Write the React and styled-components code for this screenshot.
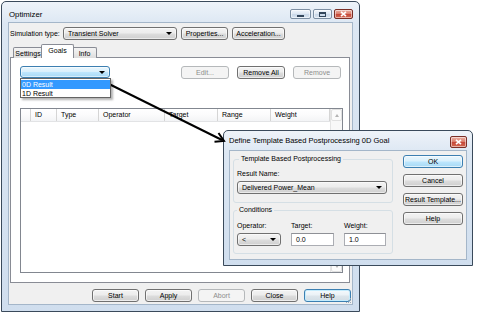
import React from 'react';
import styled, { createGlobalStyle, css } from 'styled-components';

const GlobalStyle = createGlobalStyle`
  html, body {
    margin: 0;
    padding: 0;
    background: #fff;
  }
  *, *::before, *::after {
    box-sizing: border-box;
  }
`;

const buttonFace = 'linear-gradient(180deg, #f3f3f3 0%, #ececec 48%, #dddddd 52%, #cfcfcf 100%)';
const hotFace = 'linear-gradient(180deg, #eaf6fd 0%, #d9f0fc 48%, #bee6fd 52%, #a7d9f5 100%)';

const Desktop = styled.div`
  position: relative;
  width: 480px;
  height: 314px;
  overflow: hidden;
  background: #fff;
  font-family: "Liberation Sans", Arial, sans-serif;
  font-size: 7px;
  line-height: 9px;
  color: #000;
`;

const Window = styled.div`
  position: absolute;
  left: ${p => p.$x}px;
  top: ${p => p.$y}px;
  width: ${p => p.$w}px;
  height: ${p => p.$h}px;
  display: flex;
  flex-direction: column;
  padding: 0 ${p => p.$frame}px ${p => p.$frame}px;
  border: 1px solid #3a4a5b;
  border-radius: 5px 5px 0 0;
  background: linear-gradient(180deg, #eef3f9 0px, #dce7f3 22px, #d0deee 100%);
`;

const TitleBar = styled.div`
  flex: none;
  height: ${p => p.$h}px;
  display: flex;
  align-items: center;
  padding: ${p => p.$pt}px 0 0 ${p => p.$pl}px;
`;

const Caption = styled.span`
  flex: 1;
  font-size: ${p => p.$size}px;
  white-space: nowrap;
`;

const CaptionButtons = styled.div`
  display: flex;
  gap: 2px;
  align-self: ${p => (p.$top ? 'flex-start' : 'center')};
  margin-top: ${p => p.$top || 0}px;
`;

const CaptionButton = styled.div`
  width: ${p => p.$w}px;
  height: ${p => p.$h || 10}px;
  display: flex;
  align-items: center;
  justify-content: center;
  border: 1px solid ${p => (p.$close ? '#7a2f27' : '#7d8fa3')};
  border-radius: 2px;
  background: ${p =>
    p.$close
      ? 'linear-gradient(180deg, #eab0a3 0%, #dc8170 45%, #c6493a 55%, #d46a52 100%)'
      : 'linear-gradient(180deg, #f2f6fb 0%, #dfe8f3 45%, #cbd9e9 55%, #d8e4f1 100%)'};
  box-shadow: inset 0 0 0 1px rgba(255, 255, 255, 0.5);
`;

const MinGlyph = styled.span`
  width: 7px;
  height: 2px;
  margin-top: 4px;
  background: #33465b;
`;

const MaxGlyph = styled.span`
  width: 7px;
  height: 5px;
  border: 1px solid #33465b;
  border-top-width: 2px;
`;

const Client = styled.div`
  position: relative;
  flex: 1;
  display: flex;
  flex-direction: column;
  background: #f0f0f0;
  border: 1px solid #a4b6c9;
`;

const TypeRow = styled.div`
  display: flex;
  align-items: center;
  gap: 4px;
  margin-top: 4px;
  padding-left: 1px;
`;

const FieldLabel = styled.span`
  flex: none;
  width: ${p => (p.$w ? `${p.$w}px` : 'auto')};
  white-space: nowrap;
`;

const Combo = styled.div`
  position: relative;
  flex: none;
  width: ${p => p.$w}px;
  height: ${p => p.$h || 13}px;
  display: flex;
  align-items: center;
  justify-content: space-between;
  padding: 0 4px;
  border: 1px solid ${p => (p.$hot ? '#3c7fb1' : '#707070')};
  border-radius: 3px;
  background: ${p => (p.$hot ? hotFace : buttonFace)};
  box-shadow: inset 0 0 0 1px rgba(255, 255, 255, 0.55);
  white-space: nowrap;
`;

const DropArrow = styled.span`
  width: 0;
  height: 0;
  border-left: 3px solid transparent;
  border-right: 3px solid transparent;
  border-top: 3px solid #000;
`;

const Button = styled.button`
  flex: none;
  width: ${p => p.$w}px;
  height: 13px;
  padding: 0;
  display: flex;
  align-items: center;
  justify-content: center;
  font: inherit;
  color: #000;
  white-space: nowrap;
  border: 1px solid #707070;
  border-radius: 3px;
  background: ${buttonFace};
  box-shadow: inset 0 0 0 1px rgba(255, 255, 255, 0.6);
  ${p =>
    p.$disabled &&
    css`
      color: #8d8d8d;
      border-color: #b5b8ba;
      background: #f4f4f4;
      box-shadow: none;
    `}
  ${p =>
    p.$default &&
    css`
      border-color: #3c7fb1;
      box-shadow: inset 0 0 0 1px #c4ecfd;
      background: linear-gradient(180deg, #f5fafd 0%, #eaf1f6 48%, #dde6ec 52%, #d2dde5 100%);
    `}
  ${p =>
    p.$focus &&
    css`
      border-color: #3c7fb1;
      background: ${hotFace};
    `}
`;

const TabStrip = styled.div`
  position: relative;
  z-index: 1;
  display: flex;
  align-items: flex-end;
  height: 14px;
  margin: 4px 0 -1px;
  padding-left: 4px;
`;

const Tab = styled.div`
  width: ${p => p.$w}px;
  height: 11px;
  display: flex;
  align-items: center;
  justify-content: center;
  border: 1px solid #898c95;
  border-bottom: none;
  border-radius: 2px 2px 0 0;
  background: linear-gradient(180deg, #f4f4f4 0%, #eaeaea 50%, #dcdcdc 100%);
  ${p =>
    p.$active &&
    css`
      position: relative;
      z-index: 2;
      height: 14px;
      margin: 0 -2px;
      background: #fff;
      padding-bottom: 2px;
    `}
`;

const TabPanel = styled.div`
  margin-left: 1px;
  width: 340px;
  height: 226px;
  display: flex;
  flex-direction: column;
  padding: 8px 8px 0 9px;
  border: 1px solid #898c95;
  background: #fff;
`;

const Toolbar = styled.div`
  display: flex;
  align-items: flex-start;
  height: 13px;
`;

const ButtonGroup = styled.div`
  display: flex;
  gap: 8px;
  margin-left: auto;
`;

const DropList = styled.div`
  position: absolute;
  z-index: 3;
  left: -1px;
  top: 11px;
  width: 91px;
  height: 20px;
  padding: 1px 0;
  border: 1px solid #646464;
  background: #fff;
  box-shadow: 2px 2px 2px rgba(0, 0, 0, 0.3);
`;

const DropItem = styled.div`
  height: 9px;
  line-height: 9px;
  padding-left: 1px;
  ${p =>
    p.$selected &&
    css`
      background: #3399ff;
      color: #fff;
    `}
`;

const ListView = styled.div`
  margin-top: 29px;
  width: 323px;
  height: 165px;
  display: flex;
  border: 1px solid #828790;
  background: #fff;
`;

const ListMain = styled.div`
  flex: 1;
  display: flex;
  flex-direction: column;
`;

const HeaderRow = styled.div`
  display: flex;
  height: 13px;
  border-bottom: 1px solid #e2e3e5;
  background: linear-gradient(180deg, #ffffff 0%, #fbfbfc 50%, #f3f4f6 100%);
`;

const HeaderCell = styled.div`
  flex: none;
  width: ${p => p.$w}px;
  line-height: 12px;
  padding-left: 4px;
  border-right: 1px solid #d5d5d5;
`;

const ScrollBar = styled.div`
  width: 12px;
  display: flex;
  flex-direction: column;
  justify-content: space-between;
  background: #f8f8f8;
  border-left: 1px solid #e4e4e4;
`;

const ScrollArrow = styled.div`
  height: 12px;
  display: flex;
  align-items: center;
  justify-content: center;
  border: 1px solid #e0e0e0;
  border-radius: 2px;
  background: #fbfbfb;
  &::after {
    content: '';
    width: 0;
    height: 0;
    border-left: 2.5px solid transparent;
    border-right: 2.5px solid transparent;
    ${p =>
      p.$up
        ? css`border-bottom: 3px solid #b4b4b4;`
        : css`border-top: 3px solid #b4b4b4;`}
  }
`;

const BottomBar = styled.div`
  display: flex;
  justify-content: flex-end;
  gap: 6px;
  margin-top: 6px;
  padding-right: 1px;
`;

const Grip = styled.svg`
  position: absolute;
  right: 0;
  bottom: 0;
`;

const DialogBody = styled.div`
  display: flex;
  padding: 4px 0 0 3px;
`;

const LeftColumn = styled.div`
  width: 160px;
  display: flex;
  flex-direction: column;
`;

const RightColumn = styled.div`
  display: flex;
  flex-direction: column;
  gap: 6px;
  margin-left: 10px;
`;

const GroupBox = styled.fieldset`
  margin: ${p => p.$mt || 0}px 0 0;
  padding: ${p => p.$pt}px 5px ${p => p.$pb}px 3px;
  min-width: 0;
  border: 1px solid #d5dfe5;
  border-radius: 3px;
`;

const Legend = styled.legend`
  margin-left: ${p => p.$ml || 0}px;
  padding: 0 2px;
  line-height: 8px;
  font-size: 7px;
`;

const StackLabel = styled.div`
  margin-bottom: 3px;
  line-height: 9px;
`;

const ConditionGrid = styled.div`
  display: grid;
  grid-template-columns: 44px 43px 42px;
  column-gap: 10px;
  row-gap: 3px;
  line-height: 9px;
`;

const TextBox = styled.div`
  height: 13px;
  display: flex;
  align-items: center;
  padding-left: 4px;
  border: 1px solid #abadb3;
  border-top-color: #8e9096;
  background: #fff;
`;

const Overlay = styled.svg`
  position: absolute;
  left: 0;
  top: 0;
  pointer-events: none;
`;

const CloseGlyph = () => (
  <svg width="7" height="6" viewBox="0 0 7 6">
    <path d="M1 0.8 L6 5.2 M6 0.8 L1 5.2" stroke="#fff" strokeWidth="1.6" />
  </svg>
);

const columns = [
  { w: 10, label: '' },
  { w: 26, label: 'ID' },
  { w: 42, label: 'Type' },
  { w: 66, label: 'Operator' },
  { w: 53, label: 'Target' },
  { w: 53, label: 'Range' },
  { w: 59, label: 'Weight' },
];

const MainWindow = () => (
  <Window $x={1} $y={1} $w={359} $h={311} $frame={6}>
    <TitleBar $h={20} $pt={4} $pl={1}>
      <Caption $size={7.8}>Optimizer</Caption>
      <CaptionButtons>
        <CaptionButton $w={21}>
          <MinGlyph />
        </CaptionButton>
        <CaptionButton $w={19}>
          <MaxGlyph />
        </CaptionButton>
        <CaptionButton $w={19} $close>
          <CloseGlyph />
        </CaptionButton>
      </CaptionButtons>
    </TitleBar>
    <Client>
      <TypeRow>
        <FieldLabel $w={49}>Simulation type:</FieldLabel>
        <Combo $w={114}>
          <span>Transient Solver</span>
          <DropArrow />
        </Combo>
        <Button $w={47}>Properties...</Button>
        <Button $w={53}>Acceleration...</Button>
      </TypeRow>

      <TabStrip>
        <Tab $w={30}>Settings</Tab>
        <Tab $w={33} $active>Goals</Tab>
        <Tab $w={25}>Info</Tab>
      </TabStrip>

      <TabPanel>
        <Toolbar>
          <Combo $w={90} $h={12} $hot>
            <span />
            <DropArrow />
            <DropList>
              <DropItem $selected>0D Result</DropItem>
              <DropItem>1D Result</DropItem>
            </DropList>
          </Combo>
          <ButtonGroup>
            <Button $w={48} $disabled>Edit...</Button>
            <Button $w={48}>Remove All</Button>
            <Button $w={48} $disabled>Remove</Button>
          </ButtonGroup>
        </Toolbar>

        <ListView>
          <ListMain>
            <HeaderRow>
              {columns.map(col => (
                <HeaderCell key={col.label || 'blank'} $w={col.w}>
                  {col.label}
                </HeaderCell>
              ))}
            </HeaderRow>
          </ListMain>
          <ScrollBar>
            <ScrollArrow $up />
            <ScrollArrow />
          </ScrollBar>
        </ListView>
      </TabPanel>

      <BottomBar>
        <Button $w={47}>Start</Button>
        <Button $w={47}>Apply</Button>
        <Button $w={47} $disabled>Abort</Button>
        <Button $w={47}>Close</Button>
        <Button $w={47} $default>Help</Button>
      </BottomBar>

      <Grip width="8" height="8" viewBox="0 0 8 8">
        <g fill="#9aa9b8">
          <rect x="6" y="2" width="1" height="1" />
          <rect x="4" y="4" width="1" height="1" />
          <rect x="6" y="4" width="1" height="1" />
          <rect x="2" y="6" width="1" height="1" />
          <rect x="4" y="6" width="1" height="1" />
          <rect x="6" y="6" width="1" height="1" />
        </g>
      </Grip>
    </Client>
  </Window>
);

const GoalDialog = () => (
  <Window $x={223} $y={130} $w={250} $h={136} $frame={5}>
    <TitleBar $h={19} $pt={0} $pl={0}>
      <Caption $size={7.5}>Define Template Based Postprocessing 0D Goal</Caption>
      <CaptionButtons $top={5}>
        <CaptionButton $w={17} $h={12} $close>
          <CloseGlyph />
        </CaptionButton>
      </CaptionButtons>
    </TitleBar>
    <Client>
      <DialogBody>
        <LeftColumn>
          <GroupBox $pt={6} $pb={8}>
            <Legend $ml={2}>Template Based Postprocessing</Legend>
            <StackLabel>Result Name:</StackLabel>
            <Combo $w={150}>
              <span>Delivered Power_Mean</span>
              <DropArrow />
            </Combo>
          </GroupBox>
          <GroupBox $mt={3} $pt={7} $pb={7}>
            <Legend>Conditions</Legend>
            <ConditionGrid>
              <span>Operator:</span>
              <span>Target:</span>
              <span>Weight:</span>
              <Combo $w={44}>
                <span>&lt;</span>
                <DropArrow />
              </Combo>
              <TextBox>0.0</TextBox>
              <TextBox>1.0</TextBox>
            </ConditionGrid>
          </GroupBox>
        </LeftColumn>
        <RightColumn>
          <Button $w={60} $focus>OK</Button>
          <Button $w={60}>Cancel</Button>
          <Button $w={60}>Result Template...</Button>
          <Button $w={60}>Help</Button>
        </RightColumn>
      </DialogBody>
    </Client>
  </Window>
);

export default function App() {
  return (
    <>
      <GlobalStyle />
      <Desktop>
        <MainWindow />
        <GoalDialog />
        <Overlay width="480" height="314" viewBox="0 0 480 314">
          <line x1="107" y1="83" x2="222" y2="140" stroke="#000" strokeWidth="2" />
          <polyline
            points="218.5,133 224,141 214.5,141.8"
            fill="none"
            stroke="#000"
            strokeWidth="2"
            strokeLinejoin="miter"
          />
        </Overlay>
      </Desktop>
    </>
  );
}
